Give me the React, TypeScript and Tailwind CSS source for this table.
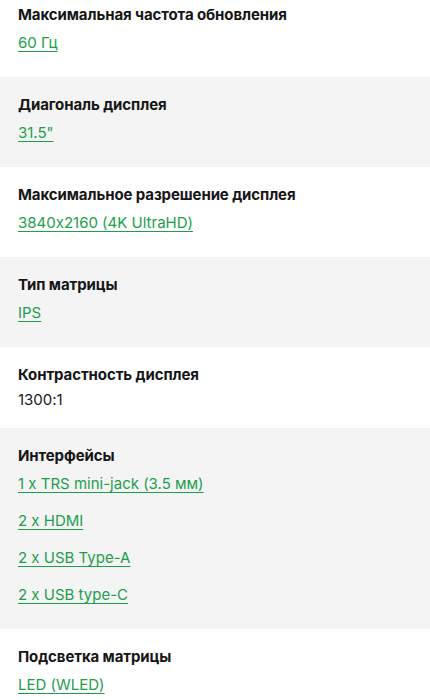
import React from 'react'

type Spec = {
    title: string
    values: string[]
    link?: boolean
}

const specs: Spec[] = [
    { title: 'Максимальная частота обновления', values: ['60 Гц'], link: true },
    { title: 'Диагональ дисплея', values: ['31.5"'], link: true },
    { title: 'Максимальное разрешение дисплея', values: ['3840x2160 (4K UltraHD)'], link: true },
    { title: 'Тип матрицы', values: ['IPS'], link: true },
    { title: 'Контрастность дисплея', values: ['1300:1'] },
    {
        title: 'Интерфейсы',
        values: ['1 x TRS mini-jack (3.5 мм)', '2 x HDMI', '2 x USB Type-A', '2 x USB type-C'],
        link: true,
    },
    { title: 'Подсветка матрицы', values: ['LED (WLED)'], link: true },
]

function SpecRow({ spec, shaded }: { spec: Spec; shaded: boolean }) {
    return (
        <div className={`px-[18px] pt-4 ${spec.link ? 'pb-[22px]' : 'pb-4'} ${shaded ? 'bg-[#f4f4f4]' : 'bg-white'}`}>
            <div className="text-[15px] font-bold leading-6 tracking-[-0.1px] text-[#161616]">{spec.title}</div>
            {spec.link ? (
                <div className="mt-1 flex flex-col items-start gap-[13px]">
                    {spec.values.map((v) => (
                        <a
                            key={v}
                            href="#"
                            className="text-[15px] leading-6 text-[#1e9d4e] underline decoration-1 underline-offset-[3px]"
                        >
                            {v}
                        </a>
                    ))}
                </div>
            ) : (
                <div className="mt-[1px] text-[15px] leading-6 text-[#1a1a1a]">{spec.values[0]}</div>
            )}
        </div>
    )
}

export default function App() {
    return (
        <div className="h-[700px] overflow-hidden bg-white font-['Inter','Noto_Sans',sans-serif] [font-feature-settings:'calt'_0]">
            <div className="-mt-[13px]">
                {specs.map((s, i) => (
                    <SpecRow key={s.title} spec={s} shaded={i % 2 === 1} />
                ))}
            </div>
        </div>
    )
}
